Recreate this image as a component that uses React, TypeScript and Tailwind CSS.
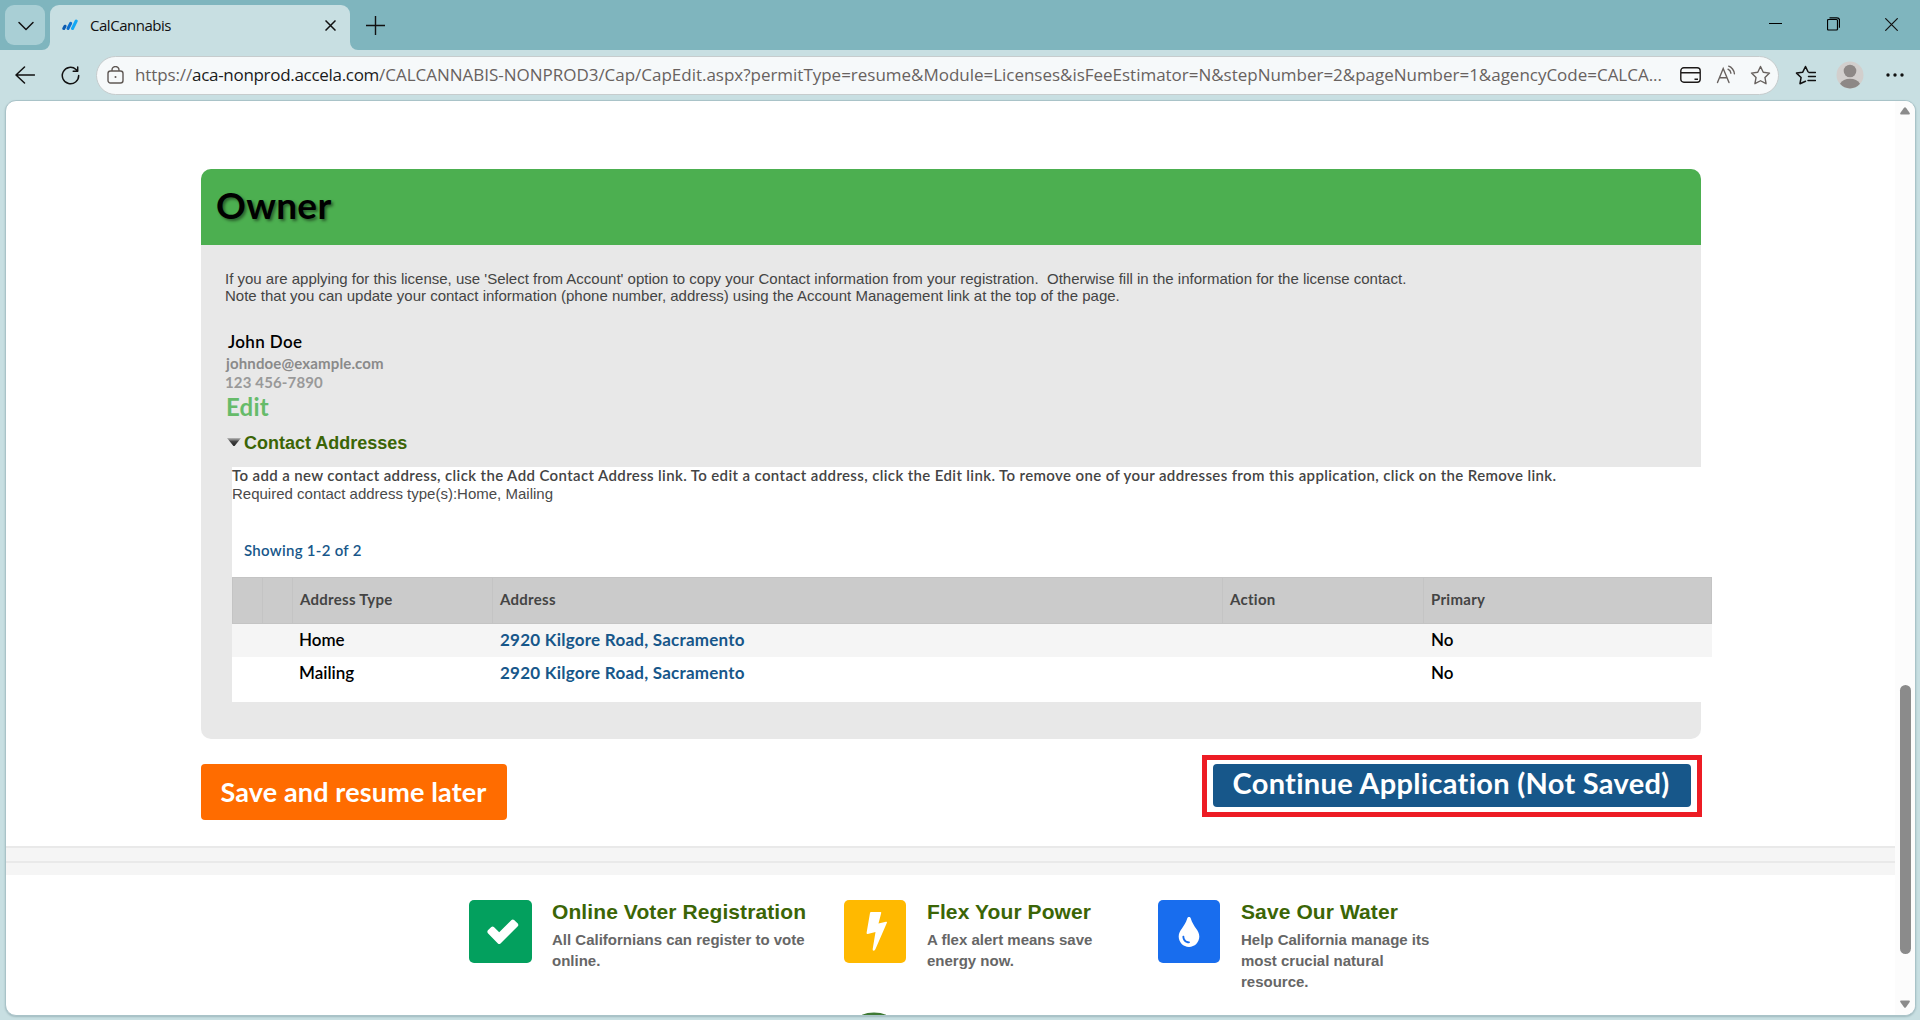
import type { ReactNode } from "react";
import { FaBolt, FaCheck, FaTint } from "react-icons/fa";

function TabBar() {
  return (
    <div className="flex h-[50px] shrink-0 items-end bg-[#7fb5be]">
      <div className="mb-[5px] ml-[5px] flex h-10 w-10 items-center justify-center rounded-[9px] bg-[#a9cfd5]">
        <svg className="mt-[2px] ml-px" width="18" height="12" viewBox="0 0 18 12" fill="none" stroke="#111" strokeWidth="1.5" strokeLinecap="round" strokeLinejoin="round">
          <path d="M2 2.500 9 9.500l7-7" />
        </svg>
      </div>
      <div className="relative ml-[5px] flex h-[45px] w-[300px] items-center rounded-t-[9px] bg-[#c8dfe2] pb-[5px]">
        <svg className="absolute bottom-0 -left-2 h-2 w-2" viewBox="0 0 8 8"><path d="M8 0v8H0a8 8 0 0 0 8-8" fill="#c8dfe2" /></svg>
        <svg className="absolute -right-2 bottom-0 h-2 w-2" viewBox="0 0 8 8"><path d="M0 0v8h8a8 8 0 0 1-8-8" fill="#c8dfe2" /></svg>
        <svg className="ml-3 shrink-0" width="16" height="12" viewBox="0 0 16 12" fill="none" strokeLinecap="round" strokeWidth="3">
          <path d="M1.800 9.500 3 7.200" stroke="#0b5bb0" />
          <path d="M6 9.500 8.700 4.300" stroke="#0a6fd0" />
          <path d="M10.500 9.500 14.200 2" stroke="#12a8f5" />
        </svg>
        <span className="ml-3 font-['Open_Sans',sans-serif] text-[15px] tracking-[-0.47px] text-[#111]">CalCannabis</span>
        <svg className="mr-[14px] ml-auto" width="11" height="11" viewBox="0 0 11 11" stroke="#111" strokeWidth="1.500"><path d="m.5.5 10 10M10.500.5l-10 10" /></svg>
      </div>
      <svg className="mb-[15px] ml-4" width="19" height="19" viewBox="0 0 19 19" stroke="#111" strokeWidth="1.400"><path d="M9.500 0v19M0 9.500h19" /></svg>
      <div className="mr-[22px] mb-[19px] ml-auto flex items-center">
        <svg width="13" height="13" viewBox="0 0 13 13" stroke="#000"><path d="M0 5.500h13" /></svg>
        <svg className="ml-[45px]" width="13" height="14" viewBox="0 0 13 14" fill="none" stroke="#000" strokeWidth="1.200">
          <rect x=".5" y="2.500" width="10" height="10.500" rx="1" />
          <path d="M2.500.8h7.500a2.500 2.500 0 0 1 2.500 2.500v7.500" />
        </svg>
        <svg className="ml-[45px]" width="13" height="13" viewBox="0 0 13 13" stroke="#111" strokeWidth="1.200"><path d="m.3.3 12.400 12.400M12.700.3.3 12.700" /></svg>
      </div>
    </div>
  );
}

const STAR = "m10.500 1.500 2.750 5.700 6.250.9-4.550 4.350 1.100 6.250-5.550-2.950-5.550 2.950 1.100-6.250L1.500 8.100l6.250-.9z";

function AddressBar() {
  return (
    <div className="flex h-[50px] shrink-0 items-center">
      <svg className="ml-[15px]" width="20" height="18" viewBox="0 0 20 18" fill="none" stroke="#111" strokeWidth="1.500" strokeLinecap="round" strokeLinejoin="round"><path d="M19.500 9H1.200M9.500 1 1 9l8.500 8" /></svg>
      <svg className="ml-[26px]" width="19" height="19" viewBox="0 0 19 19" fill="none" stroke="#111" strokeWidth="1.500" strokeLinecap="round" strokeLinejoin="round"><path d="M17.700 9.500A8.200 8.200 0 1 1 15 3.500l1.500 1.600M16.700 1v4.300h-4.500" /></svg>
      <div className="ml-4 flex h-[39px] w-[1683px] items-center rounded-full border border-[#c6cccd] bg-[#f6f9fa]">
        <svg className="mb-px ml-[10px] shrink-0" width="17" height="18" viewBox="0 0 17 18" fill="none" stroke="#5f5854" strokeWidth="1.400"><rect x="1" y="5" width="15" height="12" rx="2.500" /><path d="M5 5V4a3.500 3.500 0 0 1 7 0v1" /><circle cx="8.500" cy="11" r="1" fill="#5f5854" stroke="none" /></svg>
        <div className="mb-px ml-[11px] font-['Open_Sans',sans-serif] text-[17px] leading-[24px] whitespace-nowrap text-[#68625f]">
          <span className="tracking-[-0.12px]">https://</span>
          <span className="tracking-[-0.3px] text-[#1b1b1b]">aca-nonprod.accela.com</span>
          <span className="tracking-[-0.018px]">/CALCANNABIS-NONPROD3/Cap/CapEdit.aspx?permitType=resume&amp;Module=Licenses&amp;isFeeEstimator=N&amp;stepNumber=2&amp;pageNumber=1&amp;agencyCode=CALCA...</span>
        </div>
        <svg className="mr-[15px] ml-auto shrink-0" width="21" height="16" viewBox="0 0 21 16" fill="none" stroke="#1d1a19" strokeWidth="1.400"><rect x=".8" y=".8" width="19.400" height="14.400" rx="3" /><path d="M1 5.800h19M14.500 12.200h3.500" /></svg>
        <svg className="mr-[14px] mb-px shrink-0" width="20" height="19" viewBox="0 0 20 19" fill="none" stroke="#68625f" strokeWidth="1.400" strokeLinecap="round"><path d="M1.500 17.500 7.200 3.500l5.800 14M3.500 12.800h7.500M12 4.200c1.500.7 2.700 2.200 2.900 4M12.700 1.200c2.800.8 5.500 4 5.700 7.600" /></svg>
        <svg className="mr-[7px] shrink-0" width="21" height="20" viewBox="0 0 21 20" fill="none" stroke="#68625f" strokeWidth="1.400" strokeLinejoin="round"><path d={STAR} /></svg>
      </div>
      <svg className="ml-4" width="21" height="20" viewBox="0 0 21 20" fill="none" stroke="#111" strokeWidth="1.500" strokeLinejoin="round" strokeLinecap="round"><path d="M10.500 16.200 5 18.700l1.100-6.250L1.500 8.100l6.250-.9 2.750-5.700 2.500 5.200M14 7.500h6.500M13.500 11.500h7M13 15.500h7.500" /></svg>
      <svg className="ml-5" width="28" height="28" viewBox="0 0 28 28"><circle cx="14" cy="14" r="13.500" fill="#d2cfcd" /><circle cx="14" cy="10" r="6.300" fill="#8d8886" /><path d="M4 22.800C6 19.500 9.500 17.800 14 17.800s8 1.700 10 5A13.500 13.500 0 0 1 14 27.500 13.500 13.500 0 0 1 4 22.800" fill="#8d8886" /></svg>
      <svg className="ml-[22px]" width="18" height="4" viewBox="0 0 18 4" fill="#111"><circle cx="2" cy="2" r="1.700" /><circle cx="9" cy="2" r="1.700" /><circle cx="16" cy="2" r="1.700" /></svg>
    </div>
  );
}

const GRID = "grid grid-cols-[30px_30px_200px_730px_201px_289px]";

function HeadCell({ children }: { children?: ReactNode }) {
  return <div className="border-r border-[#c4c4c4] pl-[7px] leading-[42px] last:border-r-0">{children}</div>;
}

function Row({ type, shaded }: { type: string; shaded?: boolean }) {
  return (
    <div className={`${GRID} h-[33px] w-[1480px] text-[17px] leading-[32px] font-bold text-black ${shaded ? "bg-[#f5f5f5]" : ""}`}>
      <div />
      <div />
      <div className="pl-[7px] font-semibold">{type}</div>
      <div className="pl-2 tracking-[0.24px] text-[#17578a]">2920 Kilgore Road, Sacramento</div>
      <div />
      <div className="pl-2 font-semibold">No</div>
    </div>
  );
}

function OwnerPanel() {
  return (
    <section className="flex h-[570px] w-[1500px] flex-col rounded-[10px] bg-[#e8e8e8]">
      <h1 className="h-[76px] rounded-t-[10px] bg-[#4caf50] pl-[15px] text-[37px] leading-[72px] font-bold tracking-[0.3px] text-black [text-shadow:2px_2px_3px_rgba(0,0,0,0.45)]">Owner</h1>
      <div className="flex flex-col pt-[25px] pl-[24px] whitespace-pre">
        <p className="font-['Liberation_Sans',sans-serif] text-[15px] leading-[17px] text-[#444]">
          {"If you are applying for this license, use 'Select from Account' option to copy your Contact information from your registration.\u00a0 Otherwise fill in the information for the license contact.\nNote that you can update your contact information (phone number, address) using the Account Management link at the top of the page."}
        </p>
        <p className="mt-[26px] ml-[3px] text-[17px] leading-[24px] font-semibold tracking-[0.35px] text-black">John Doe</p>
        <p className="ml-px text-[15px] leading-[19px] font-bold tracking-[0.14px] text-[#8a8a8a]">johndoe@example.com</p>
        <p className="text-[15px] leading-[19px] font-bold tracking-[0.14px] text-[#999]">123 456-7890</p>
        <p className="ml-px text-[24px] leading-[30px] font-bold tracking-[0.2px] text-[#66bb6a]">Edit</p>
        <div className="mt-[9px] flex items-center">
          <svg className="mb-[2px] ml-[2px]" width="14" height="8" viewBox="0 0 14 8">
            <defs><linearGradient id="arrow" x1="0" y1="0" x2="0" y2="1"><stop offset="0" stopColor="#bbb" /><stop offset=".45" stopColor="#444" /><stop offset="1" stopColor="#222" /></linearGradient></defs>
            <path d="M0 0h14L8 7.400a1.400 1.400 0 0 1-2 0z" fill="url(#arrow)" />
          </svg>
          <h2 className="ml-[3px] font-['Liberation_Sans',sans-serif] text-[18px] leading-[24px] font-bold text-[#3b6506]">Contact Addresses</h2>
        </div>
        <div className="mt-3 ml-[7px] h-[235px] bg-white">
          <p className="text-[15px] leading-[17px] font-semibold tracking-[0.371px] text-[#444]">To add a new contact address, click the Add Contact Address link. To edit a contact address, click the Edit link. To remove one of your addresses from this application, click on the Remove link.</p>
          <p className="mt-px font-['Liberation_Sans',sans-serif] text-[15px] leading-[18px] text-[#4a4a4a]">Required contact address type(s):Home, Mailing</p>
          <p className="mt-[38px] ml-3 text-[15px] leading-[18px] font-semibold tracking-[0.28px] text-[#17578a]">Showing 1-2 of 2</p>
          <div className={`${GRID} mt-[18px] h-[47px] w-[1480px] border border-[#c4c4c4] bg-[#cbcbcb] text-[15px] font-bold tracking-[0.28px] text-[#444]`}>
            <HeadCell />
            <HeadCell />
            <HeadCell>Address Type</HeadCell>
            <HeadCell>Address</HeadCell>
            <HeadCell>Action</HeadCell>
            <HeadCell>Primary</HeadCell>
          </div>
          <Row type="Home" shaded />
          <Row type="Mailing" />
        </div>
      </div>
    </section>
  );
}

function Promo({ box, icon, title, lines }: { box: string; icon: ReactNode; title: string; lines: string[] }) {
  return (
    <div className="flex">
      <div className={`flex h-[63px] shrink-0 items-center justify-center rounded-[5px] text-white ${box}`}>{icon}</div>
      <div className="ml-5 font-['Liberation_Sans',sans-serif] font-bold">
        <h3 className="text-[21px] leading-[24px] tracking-[0.1px] text-[#3b6506]">{title}</h3>
        <div className="mt-[5px] text-[15px] leading-[21px] text-[#666]">
          {lines.map((l) => <p key={l}>{l}</p>)}
        </div>
      </div>
    </div>
  );
}

function BoltIcon() {
  return (
    <svg className="ml-1" width="22" height="39" viewBox="0 0 22 39" fill="currentColor">
      <path d="M5 0h9.500q1 0 .700 1l-2.700 10.500 7.500-1.800q1.300-.2.900 1L9.500 37q-.6 1.800-1.800 1.800-1.400-.2-1-1.800L9.500 20l-7.800 1.900Q.4 22 .6 20.700L4 1q.2-1 1-1" />
    </svg>
  );
}

function CheckIcon() {
  return (
    <svg className="mt-px ml-1" width="32" height="26" viewBox="0 0 32 26" fill="currentColor">
      <path d="M.9 11.300 4.300 8q1.300-1 2.600 0l5.300 5.200L24.500 1q1.300-1 2.600 0l3.700 3.600q1 1.300 0 2.600L13.500 24.500q-1.300 1-2.600 0L.9 14.200q-1.100-1.400 0-2.900" />
    </svg>
  );
}

export default function App() {
  return (
    <div className="flex h-[1020px] w-[1920px] flex-col overflow-hidden bg-[#c8dfe2] font-['Lato',sans-serif]">
      <TabBar />
      <AddressBar />
      <div className="ml-[5px] flex h-[916px] w-[1911px] shrink-0 overflow-hidden rounded-[11px] border border-[#a9c3c8] bg-white shadow-[0_1px_2px_#9fb9be]">
        <main className="flex w-[1889px] shrink-0 flex-col pt-[68px]">
          <div className="ml-[195px]">
            <OwnerPanel />
            <div className="mt-4 flex items-start justify-between">
              <button className="mt-[9px] h-[56px] w-[306px] rounded-[4px] bg-[#ff6c00] pr-px text-[27px] leading-[54px] font-bold tracking-[0.14px] text-white">Save and resume later</button>
              <div className="mr-[193px] h-[62px] w-[500px] border-[5px] border-[#ed1c24] bg-white px-[6px] pt-1">
                <button className="h-[43px] w-full rounded-[4px] bg-[#17578a] pr-[2px] pb-[5px] text-[29px] leading-[38px] font-bold tracking-[0.3px] text-white">Continue Application (Not Saved)</button>
              </div>
            </div>
          </div>
          <div className="mt-[26px] h-[29px] shrink-0 border-t-2 border-[#e9e9e9] bg-[#f5f5f5] pt-[13px]">
            <div className="h-[2px] bg-[#e9e9e9]" />
          </div>
          <div className="mt-[25px] ml-[463px] grid grid-cols-[375px_314px_300px]">
            <Promo box="w-[63px] bg-[#03a05e]" icon={<CheckIcon />} title="Online Voter Registration" lines={["All Californians can register to vote", "online."]} />
            <Promo box="mr-px w-[62px] bg-[#ffb900]" icon={<BoltIcon />} title="Flex Your Power" lines={["A flex alert means save", "energy now."]} />
            <Promo box="mr-px w-[62px] bg-[#186dee]" icon={<FaTint className="h-[30px] w-[22px]" />} title="Save Our Water" lines={["Help California manage its", "most crucial natural", "resource."]} />
          </div>
          <svg className="mt-[20px] ml-[856px] shrink-0" width="24" height="24" viewBox="0 0 24 24"><ellipse cx="12" cy="12" rx="20" ry="11.500" fill="#3f7a35" /></svg>
        </main>
        <div className="flex w-[20px] shrink-0 flex-col items-center bg-[#fcfcfc]">
          <svg className="mt-[6px] shrink-0" width="10" height="8" viewBox="0 0 10 8" fill="#8b8b8b"><path d="M.3 6 4 .8q1-1.200 2 0L9.700 6q.6 1.500-.7 1.500H1Q-.3 7.500.3 6" /></svg>
          <div className="mt-[570px] h-[269px] w-[11px] shrink-0 rounded-full bg-[#8b8b8b]" />
          <svg className="mt-[46px] shrink-0" width="10" height="8" viewBox="0 0 10 8" fill="#8b8b8b"><path d="M.3 2 4 7.200q1 1.200 2 0L9.700 2Q10.300.5 9 .5H1Q-.3.5.3 2" /></svg>
        </div>
      </div>
    </div>
  );
}
